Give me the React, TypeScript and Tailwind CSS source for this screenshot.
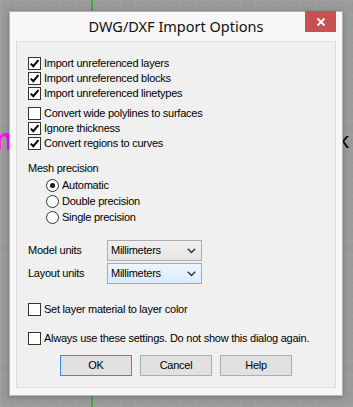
import React from "react";

function CheckBox({ checked }: { checked: boolean }) {
  return (
    <span className="flex h-[13px] w-[13px] shrink-0 items-center justify-center border border-[#333333] bg-white">
      {checked && (
        <svg width="11" height="11" viewBox="0 0 11 11">
          <path d="M1.8 5.6 L4.3 8.2 L9.4 2.2" fill="none" stroke="#000" strokeWidth="2" />
        </svg>
      )}
    </span>
  );
}

function CheckRow({ label, checked }: { label: string; checked: boolean }) {
  return (
    <div className="flex h-[15px] items-center gap-[3px]">
      <CheckBox checked={checked} />
      <span>{label}</span>
    </div>
  );
}

function Radio({ label, selected }: { label: string; selected?: boolean }) {
  return (
    <div className="ml-[18px] flex h-[16px] items-center gap-[3px]">
      <span className="flex h-[13px] w-[13px] shrink-0 items-center justify-center rounded-full border border-[#333333] bg-white">
        {selected && <span className="h-[5px] w-[5px] rounded-full bg-[#1a1a1a]" />}
      </span>
      <span>{label}</span>
    </div>
  );
}

function Chevron() {
  return (
    <svg width="9" height="6" viewBox="0 0 9 6" className="ml-auto mr-[5px]">
      <path d="M0.8 0.8 L4.5 4.5 L8.2 0.8" fill="none" stroke="#333" strokeWidth="1.4" />
    </svg>
  );
}

function UnitRow({ label, focused }: { label: string; focused?: boolean }) {
  return (
    <div className="flex items-center">
      <span className="w-[79px]">{label}</span>
      <div
        className={
          focused
            ? "flex h-[21px] w-[95px] items-center border border-[#7eb4ea] bg-gradient-to-b from-[#ecf4fc] to-[#dcecfc] pl-[3px]"
            : "flex h-[21px] w-[95px] items-center border border-[#acacac] bg-gradient-to-b from-[#f0f0f0] to-[#e5e5e5] pl-[3px]"
        }
      >
        <span>Millimeters</span>
        <Chevron />
      </div>
    </div>
  );
}

function Button({ label, primary }: { label: string; primary?: boolean }) {
  return (
    <button
      className={
        primary
          ? "flex h-[21px] w-[72px] items-center justify-center border border-[#3c8de0] bg-[#e1e1e1]"
          : "flex h-[21px] w-[72px] items-center justify-center border border-[#adadad] bg-[#e1e1e1]"
      }
    >
      {label}
    </button>
  );
}

export default function App() {
  return (
    <div className="relative h-[407px] w-[353px] overflow-hidden bg-[#9a9a9a] bg-[linear-gradient(to_right,#a1a1a1_1px,transparent_1px),linear-gradient(to_bottom,#a1a1a1_1px,transparent_1px)] bg-[size:15px_15px] pl-[9px] pt-[11px]">
      <div className="absolute left-[91px] top-0 h-full w-[2px] bg-[#45a845]" />
      <span className="absolute left-[-6px] top-[123px] font-['Liberation_Sans',sans-serif] text-[32px] font-bold leading-none text-[#ff00ff]">
        n
      </span>
      <span className="absolute left-[338px] top-[124px] font-['Liberation_Sans',sans-serif] text-[22px] text-black">
        k
      </span>

      <div className="relative flex h-[385px] w-[334px] flex-col border border-[#b4b4b4] bg-[#f7f7f7] px-[6px] shadow-[0_1px_6px_rgba(0,0,0,0.25)]">
        <div className="flex h-[29px] items-center justify-center font-['Noto_Sans',sans-serif] text-[14.5px] text-[#111]">
          DWG/DXF Import Options
        </div>
        <button className="absolute right-[6px] top-[-1px] flex h-[21px] w-[31px] items-center justify-center bg-[#c75050]">
          <svg width="10" height="10" viewBox="0 0 10 10">
            <path d="M1.5 1.5 L8.5 8.5 M8.5 1.5 L1.5 8.5" stroke="#fff" strokeWidth="1.8" />
          </svg>
        </button>

        <div className="flex h-[347px] flex-col border border-[#dcdcdc] bg-[#f0f0f0] pl-[11px] pt-[14px] font-['Liberation_Sans',sans-serif] text-[11px] tracking-[-0.25px] text-black">
          <CheckRow label="Import unreferenced layers" checked />
          <CheckRow label="Import unreferenced blocks" checked />
          <CheckRow label="Import unreferenced linetypes" checked />

          <div className="mt-[5px]">
            <CheckRow label="Convert wide polylines to surfaces" checked={false} />
            <CheckRow label="Ignore thickness" checked />
            <CheckRow label="Convert regions to curves" checked />
          </div>

          <div className="mt-[10px] flex h-[15px] items-center">Mesh precision</div>
          <div className="mt-[1px]">
            <Radio label="Automatic" selected />
            <Radio label="Double precision" />
            <Radio label="Single precision" />
          </div>

          <div className="mt-[15px] flex flex-col gap-[2px]">
            <UnitRow label="Model units" />
            <UnitRow label="Layout units" focused />
          </div>

          <div className="mt-[18px]">
            <CheckRow label="Set layer material to layer color" checked={false} />
          </div>
          <div className="mt-[14px]">
            <CheckRow label="Always use these settings. Do not show this dialog again." checked={false} />
          </div>

          <div className="mt-[9px] flex gap-2 pl-[32px]">
            <Button label="OK" primary />
            <Button label="Cancel" />
            <Button label="Help" />
          </div>
        </div>
      </div>
    </div>
  );
}
